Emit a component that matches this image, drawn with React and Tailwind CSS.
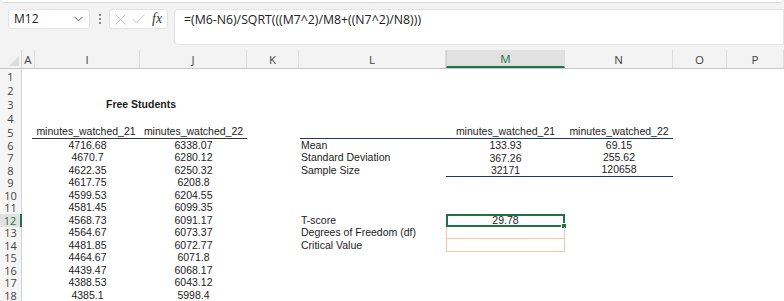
import React from 'react';

const COLS = ['A', 'I', 'J', 'K', 'L', 'M', 'N', 'O', 'P'];
const GRID = 'grid grid-rows-1 grid-cols-[22px_13px_105px_107px_52px_147px_119px_108px_54px_57px]';

const left = [
  ['4716.68', '6338.07'],
  ['4670.7', '6280.12'],
  ['4622.35', '6250.32'],
  ['4617.75', '6208.8'],
  ['4599.53', '6204.55'],
  ['4581.45', '6099.35'],
  ['4568.73', '6091.17'],
  ['4564.67', '6073.37'],
  ['4481.85', '6072.77'],
  ['4464.67', '6071.8'],
  ['4439.47', '6068.17'],
  ['4388.53', '6043.12'],
  ['4385.1', '5998.4'],
];

const stats = {
  6: ['Mean', '133.93', '69.15'],
  7: ['Standard Deviation', '367.26', '255.62'],
  8: ['Sample Size', '32171', '120658'],
  12: ['T-score', '29.78', ''],
  13: ['Degrees of Freedom (df)', '', ''],
  14: ['Critical Value', '', ''],
};

const Cell = ({ children, className = '' }) => (
  <div className={`flex items-center whitespace-nowrap leading-[11px] min-h-0 ${className}`}>{children}</div>
);

const Row = ({ n }) => {
  const h = n <= 5 ? 'h-[14px]' : 'h-[12.5px]';
  const sel = n === 12;
  const data = n >= 6 ? left[n - 6] : null;
  const st = stats[n];

  return (
    <div className={`${GRID} ${h}`}>
      <div
        className={`flex items-center justify-center min-h-0 text-[11px] leading-[11px] ${
          sel
            ? 'bg-[#e1e1e1] text-[#217346] border-r-2 border-[#217346]'
            : 'bg-[#f5f5f5] text-[#444] border-r border-[#d4d4d4]'
        }`}
        style={{ fontFamily: '"Open Sans", sans-serif' }}
      >
        {n}
      </div>
      <Cell />
      {n === 3 ? (
        <Cell className="col-span-2 justify-center font-bold">Free Students</Cell>
      ) : n === 5 ? (
        <>
          <Cell className="justify-center border-b border-[#333] ml-[-3px]">minutes_watched_21</Cell>
          <Cell className="justify-center border-b border-[#333]">minutes_watched_22</Cell>
        </>
      ) : (
        <>
          <Cell className="justify-center">{data && data[0]}</Cell>
          <Cell className="justify-center">{data && data[1]}</Cell>
        </>
      )}
      <Cell />
      <Cell className={`pl-[2px] ${n === 5 ? 'border-b border-[#1f3864] ml-[1px]' : ''}`}>{st && st[0]}</Cell>
      {n === 5 ? (
        <>
          <Cell className="justify-center border-b border-[#1f3864]">minutes_watched_21</Cell>
          <Cell className="justify-center border-b border-[#1f3864]">minutes_watched_22</Cell>
        </>
      ) : (
        <>
          <div
            className={`relative flex items-center justify-center min-h-0 leading-[10px] ${
              n === 8 ? 'border-b border-[#1f3864]' : ''
            } ${sel ? 'border-2 border-[#217346]' : ''} ${
              n === 13 || n === 14 ? 'border-x border-b border-[#f8c6a2]' : ''
            }`}
          >
            {st && st[1]}
            {sel && (
              <span className="absolute right-[-4px] bottom-[-4px] w-[6px] h-[6px] bg-[#217346] border border-white" />
            )}
          </div>
          <Cell className={`justify-center ${n === 8 ? 'border-b border-[#1f3864]' : ''}`}>{st && st[2]}</Cell>
        </>
      )}
      <Cell />
      <Cell />
    </div>
  );
};

export default function App() {
  const rows = Array.from({ length: 18 }, (_, i) => i + 1);
  return (
    <div className="w-[784px] h-[301px] overflow-hidden bg-[#f3f3f3] flex flex-col">
      <div className="h-[3px] shrink-0 bg-white border-b border-[#dcdcdc] rounded-b-[3px] mx-[2px]" />

      {/* formula bar */}
      <div
        className="flex items-start pt-[6px] h-[44px] shrink-0"
        style={{ fontFamily: '"Open Sans", "Noto Sans", sans-serif' }}
      >
        <div className="ml-[8px] w-[82px] h-[20px] bg-white border border-[#e3e3e3] rounded-[3px] flex items-center justify-between pl-[5px] pr-[6px] text-[12px] text-[#222]">
          <span>M12</span>
          <svg width="9" height="6" viewBox="0 0 9 6" fill="none" stroke="#555" strokeWidth="1">
            <polyline points="0.5,0.8 4.5,4.8 8.5,0.8" />
          </svg>
        </div>
        <div className="w-[19px] h-[20px] flex flex-col items-center justify-center gap-[2px]">
          <span className="w-[2px] h-[2px] bg-[#666] rounded-full" />
          <span className="w-[2px] h-[2px] bg-[#666] rounded-full" />
          <span className="w-[2px] h-[2px] bg-[#666] rounded-full" />
        </div>
        <div className="w-[59px] h-[20px] bg-white border border-[#e3e3e3] rounded-[3px] flex items-center pl-[5px] gap-[6px]">
          <svg width="11" height="11" viewBox="0 0 11 11" stroke="#c4c4c4" strokeWidth="1">
            <line x1="0.5" y1="0.5" x2="10.5" y2="10.5" />
            <line x1="10.5" y1="0.5" x2="0.5" y2="10.5" />
          </svg>
          <svg width="13" height="10" viewBox="0 0 13 10" fill="none" stroke="#c4c4c4" strokeWidth="1">
            <polyline points="0.5,5 4.5,9 12.5,0.5" />
          </svg>
          <span
            className="italic text-[14px] text-[#333] leading-none ml-[1px]"
            style={{ fontFamily: '"Liberation Serif", serif' }}
          >
            fx
          </span>
        </div>
        <div className="ml-[6px] flex-1 h-[36px] bg-white border border-[#e3e3e3] rounded-l-[4px] pl-[9px] pt-[1px] text-[12.3px] text-[#222] leading-[18px]">
          =(M6-N6)/SQRT(((M7^2)/M8+((N7^2)/N8)))
        </div>
      </div>

      {/* column headers */}
      <div
        className={`${GRID} h-[19px] shrink-0 mt-[3px] border-b border-[#c8c8c8] text-[11.5px] text-[#444]`}
        style={{ fontFamily: '"Open Sans", sans-serif' }}
      >
        <div className="relative border-r border-[#d4d4d4]">
          <svg className="absolute right-[2px] bottom-[2px]" width="10" height="10" viewBox="0 0 10 10">
            <polygon points="10,0 10,10 0,10" fill="#dcdcdc" />
          </svg>
        </div>
        {COLS.map((c) => (
          <div
            key={c}
            className={`flex items-center justify-center min-h-0 pt-[2px] leading-[12px] border-r border-[#dcdcdc] ${
              c === 'M' ? 'bg-[#e1e1e1] text-[#217346] border-b-2 border-b-[#217346] border-l border-l-[#d0d0d0]' : ''
            }`}
          >
            {c}
          </div>
        ))}
      </div>

      {/* sheet */}
      <div
        className="bg-white text-[10.5px] text-[#1c1c1c] shrink-0"
        style={{ fontFamily: '"Liberation Sans", Arial, sans-serif' }}
      >
        {rows.map((n) => (
          <Row key={n} n={n} />
        ))}
      </div>
    </div>
  );
}
